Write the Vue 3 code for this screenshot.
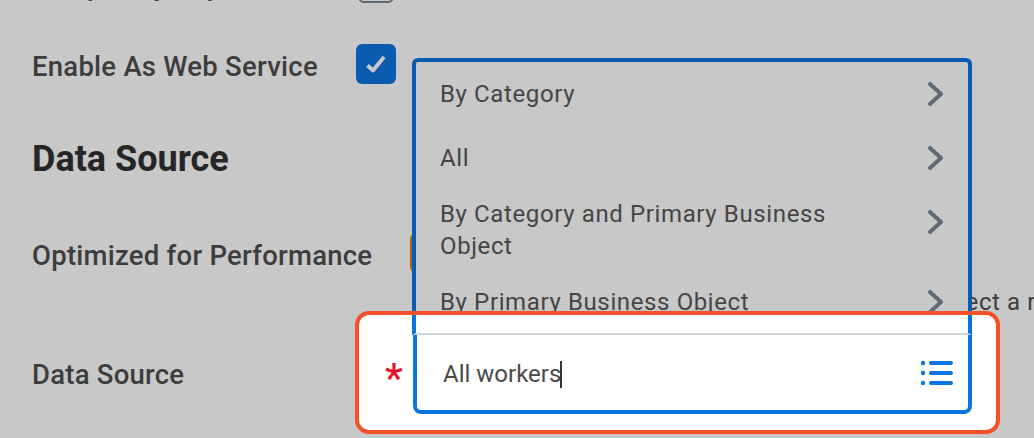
<template>
  <div class="page">
    <div class="form">
      <div class="row row-first">
        <span class="label">Temporary Report</span>
        <span class="check"></span>
      </div>
      <div class="row row-service">
        <span class="label">Enable As Web Service</span>
        <span class="check check-on">
          <svg width="24" height="24" viewBox="0 0 24 24">
            <path d="M3.5 13.5 L9 18.5 L20 5" fill="none" stroke="#c8c8c8" stroke-width="3.8" stroke-linejoin="round" />
          </svg>
        </span>
      </div>
      <h2 class="heading">Data Source</h2>
      <div class="row row-perf">
        <span class="label">Optimized for Performance</span>
        <span class="check check-warn"></span>
      </div>
      <p class="hint">Select a report</p>
      <div class="row row-source">
        <span class="label">Data Source</span>
      </div>
    </div>

    <ul class="menu">
      <li v-for="item in items" :key="item" class="menu-item">
        <span class="menu-text">{{ item }}</span>
        <svg class="chevron" width="20" height="48" viewBox="0 0 20 48">
          <path d="M4 14 L15 24 L4 34" fill="none" stroke="#5e6a75" stroke-width="4" stroke-linecap="round" stroke-linejoin="round" />
        </svg>
      </li>
    </ul>

    <div class="spotlight">
      <span class="required">*</span>
      <div class="combo">
        <div class="combo-top"></div>
        <div class="combo-input">
          <span class="combo-value">All workers</span>
          <span class="caret"></span>
          <svg class="list-icon" width="34" height="26" viewBox="0 0 34 26">
            <circle cx="3" cy="3" r="2.2" />
            <circle cx="3" cy="13" r="2.2" />
            <circle cx="3" cy="23" r="2.2" />
            <rect x="9" y="1" width="24" height="4" rx="2" />
            <rect x="9" y="11" width="24" height="4" rx="2" />
            <rect x="9" y="21" width="24" height="4" rx="2" />
          </svg>
        </div>
      </div>
    </div>
  </div>
</template>

<script setup>
const items = [
  'By Category',
  'All',
  'By Category and Primary Business Object',
  'By Primary Business Object'
]
</script>

<style>
html,
body {
  margin: 0;
  background: #c8c8c8;
}
</style>

<style scoped>
.page {
  position: relative;
  width: 1034px;
  height: 438px;
  overflow: hidden;
  background: #c8c8c8;
  font-family: Roboto, "Liberation Sans", sans-serif;
  color: #3d3d3d;
}

.form {
  padding-left: 32px;
}

.row {
  display: flex;
  align-items: center;
  height: 40px;
}

.row-first {
  margin-top: -37px;
}

.row-service {
  margin-top: 41px;
}

.row-perf {
  margin-top: 54px;
}

.row-source {
  margin-top: 34px;
}

.label {
  min-width: 324px;
  padding-top: 4px;
  font-size: 27.5px;
  font-weight: 500;
  letter-spacing: 0.24px;
  white-space: nowrap;
}

.row-perf .label {
  margin-right: 38px;
}

.check {
  box-sizing: border-box;
  display: flex;
  align-items: center;
  justify-content: center;
  width: 36px;
  height: 40px;
  margin-left: 2px;
  border: 2px solid #5e6a75;
  border-radius: 6px;
}

.check-on {
  width: 40px;
  margin-left: 0;
  border: none;
  background: #0b5cb1;
}

.check-warn {
  width: 40px;
  margin-left: 0;
  border: 4px solid #a86a10;
}

.heading {
  margin: 55px 0 0;
  font-size: 36px;
  line-height: 40px;
  font-weight: 700;
  color: #262626;
}

.hint {
  margin: 13px 0 0 899px;
  font-size: 24px;
  line-height: 32px;
  letter-spacing: 0.6px;
  white-space: nowrap;
}

.menu {
  box-sizing: border-box;
  position: absolute;
  left: 412px;
  top: 58px;
  width: 560px;
  height: 280px;
  margin: 0;
  padding: 0;
  list-style: none;
  border: 4px solid #0b5cb1;
  border-bottom: none;
  border-radius: 6px 6px 0 0;
  background: #c8c8c8;
}

.menu-item {
  display: flex;
  align-items: flex-start;
  justify-content: space-between;
  min-height: 48px;
  padding: 8px 22px 8px 24px;
}

.menu-text {
  max-width: 440px;
  display: flex;
  align-items: center;
  min-height: 48px;
  font-size: 24px;
  line-height: 32px;
  letter-spacing: 0.62px;
  color: #454545;
}

.spotlight {
  box-sizing: border-box;
  position: absolute;
  left: 355px;
  top: 311px;
  width: 645px;
  height: 123px;
  display: flex;
  align-items: flex-start;
  border: 4px solid #f4502a;
  border-radius: 14px;
  background: #fff;
}

.required {
  position: absolute;
  left: 26px;
  top: 44px;
  font-size: 40px;
  line-height: 40px;
  font-weight: 500;
  color: #e8112d;
}

.combo {
  display: flex;
  flex-direction: column;
  width: 559px;
  margin-left: 54px;
}

.combo-top {
  box-sizing: border-box;
  height: 20px;
  margin-left: -1px;
  border-left: 4px solid #0875e1;
  border-right: 4px solid #0875e1;
  border-bottom: 2px solid #ced3d9;
}

.combo-input {
  box-sizing: border-box;
  display: flex;
  align-items: center;
  height: 79px;
  padding: 3px 14px 0 26px;
  border: 4px solid #0875e1;
  border-top: none;
  border-radius: 0 0 8px 8px;
  font-size: 24px;
  color: #4a4a4a;
}

.combo-value {
  white-space: nowrap;
}

.caret {
  width: 2px;
  height: 27px;
  margin-left: -1px;
  background: #333;
}

.list-icon {
  margin-top: -3px;
  margin-left: auto;
  fill: #0875e1;
}
</style>
